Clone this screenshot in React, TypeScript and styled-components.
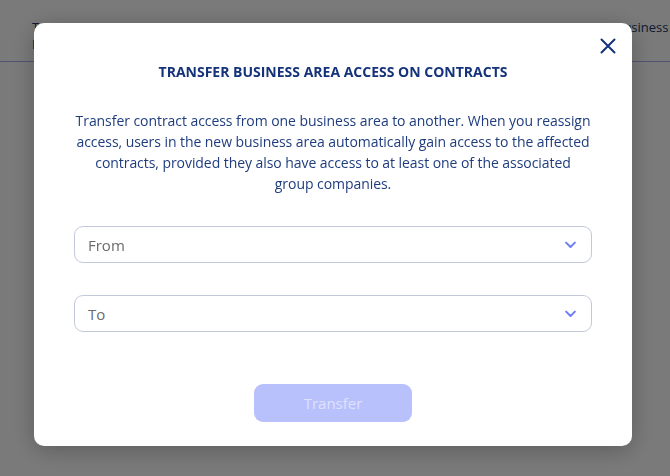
import { useState } from 'react';
import styled, { createGlobalStyle } from 'styled-components';

const GlobalStyle = createGlobalStyle`
  html, body {
    margin: 0;
    padding: 0;
    background: #ffffff;
    font-family: 'Open Sans', 'Noto Sans', sans-serif;
  }
`;

const ChevronDown = () => (
  <svg width="15" height="15" viewBox="0 0 24 24" fill="none" stroke="#6f7ef6" strokeWidth="3.2" strokeLinecap="round" strokeLinejoin="round">
    <path d="M5 9l7 7 7-7" />
  </svg>
);

const CloseIcon = () => (
  <svg width="16" height="16" viewBox="0 0 16 16" fill="none" stroke="#15337a" strokeWidth="2" strokeLinecap="round">
    <path d="M1.5 1.5l13 13M14.5 1.5l-13 13" />
  </svg>
);

const Select: React.FC<{ placeholder: string }> = ({ placeholder }) => (
  <StSelect type="button">
    <StPlaceholder>{placeholder}</StPlaceholder>
    <ChevronDown />
  </StSelect>
);

const App = () => {
  const [open, setOpen] = useState(true);

  return (
    <>
      <GlobalStyle />
      <StPage>
        <StTableHead>
          <StHeadCell $width="546px">
            <span>Type</span>
            <span>ID</span>
          </StHeadCell>
          <StHeadCell $width="120px">
            <span>Business area</span>
          </StHeadCell>
        </StTableHead>
      </StPage>

      {open && (
        <StOverlay>
          <StModal>
            <StCloseButton type="button" aria-label="Close" onClick={() => setOpen(false)}>
              <CloseIcon />
            </StCloseButton>
            <StTitle>TRANSFER BUSINESS AREA ACCESS ON CONTRACTS</StTitle>
            <StDescription>
              Transfer contract access from one business area to another. When you reassign
              <br />
              access, users in the new business area automatically gain access to the affected
              <br />
              contracts, provided they also have access to at least one of the associated
              <br />
              group companies.
            </StDescription>
            <StFields>
              <Select placeholder="From" />
              <Select placeholder="To" />
            </StFields>
            <StTransferButton type="button" disabled>
              Transfer
            </StTransferButton>
          </StModal>
        </StOverlay>
      )}
    </>
  );
};

const StPage = styled.div`
  min-height: 476px;
  background: #ffffff;
  overflow: hidden;
`;

const StTableHead = styled.div`
  display: flex;
  gap: 37px;
  padding: 19px 0 0 32px;
  height: 42px;
  border-bottom: 1px solid #a9aef0;
  white-space: nowrap;
`;

const StHeadCell = styled.div<{ $width: string }>`
  flex: 0 0 ${({ $width }) => $width};
  display: flex;
  flex-direction: column;
  color: #22356b;
  font-size: 13px;
  line-height: 17px;
`;

const StOverlay = styled.div`
  position: fixed;
  inset: 0;
  background: rgba(0, 0, 0, 0.52);
  display: flex;
  justify-content: flex-start;
  align-items: flex-start;
  padding: 23px 0 0 34px;
`;

const StModal = styled.div`
  position: relative;
  width: 598px;
  height: 423px;
  box-sizing: border-box;
  background: #ffffff;
  border-radius: 10px;
  box-shadow: 0 4px 24px rgba(0, 0, 0, 0.25);
  padding: 40px 40px 0;
  display: flex;
  flex-direction: column;
  align-items: center;
`;

const StCloseButton = styled.button`
  position: absolute;
  top: 15px;
  right: 16px;
  width: 16px;
  height: 16px;
  padding: 0;
  border: none;
  background: none;
  cursor: pointer;
  display: flex;
`;

const StTitle = styled.h2`
  margin: 0;
  color: #15337a;
  font-size: 14px;
  font-weight: 700;
  line-height: 18px;
`;

const StDescription = styled.p`
  margin: 29px -4px 0;
  color: #1f3d7e;
  font-size: 14px;
  letter-spacing: -0.06px;
  line-height: 21px;
  text-align: center;
  white-space: nowrap;
`;

const StFields = styled.div`
  align-self: stretch;
  display: flex;
  flex-direction: column;
  gap: 32px;
  margin-top: 32px;
`;

const StSelect = styled.button`
  height: 37px;
  box-sizing: border-box;
  border: 1px solid #c3c9d9;
  border-radius: 9px;
  background: #ffffff;
  padding: 0 13px 0 13px;
  display: flex;
  align-items: center;
  justify-content: space-between;
  cursor: pointer;
  font-family: inherit;
`;

const StPlaceholder = styled.span`
  color: #6b6b6b;
  font-size: 15px;
`;

const StTransferButton = styled.button`
  margin-top: 52px;
  width: 158px;
  height: 38px;
  border: none;
  border-radius: 9px;
  background: #b9c1fc;
  color: #dfe2fe;
  font-family: inherit;
  font-size: 15px;

  &:disabled {
    cursor: default;
  }
`;

export default App;
